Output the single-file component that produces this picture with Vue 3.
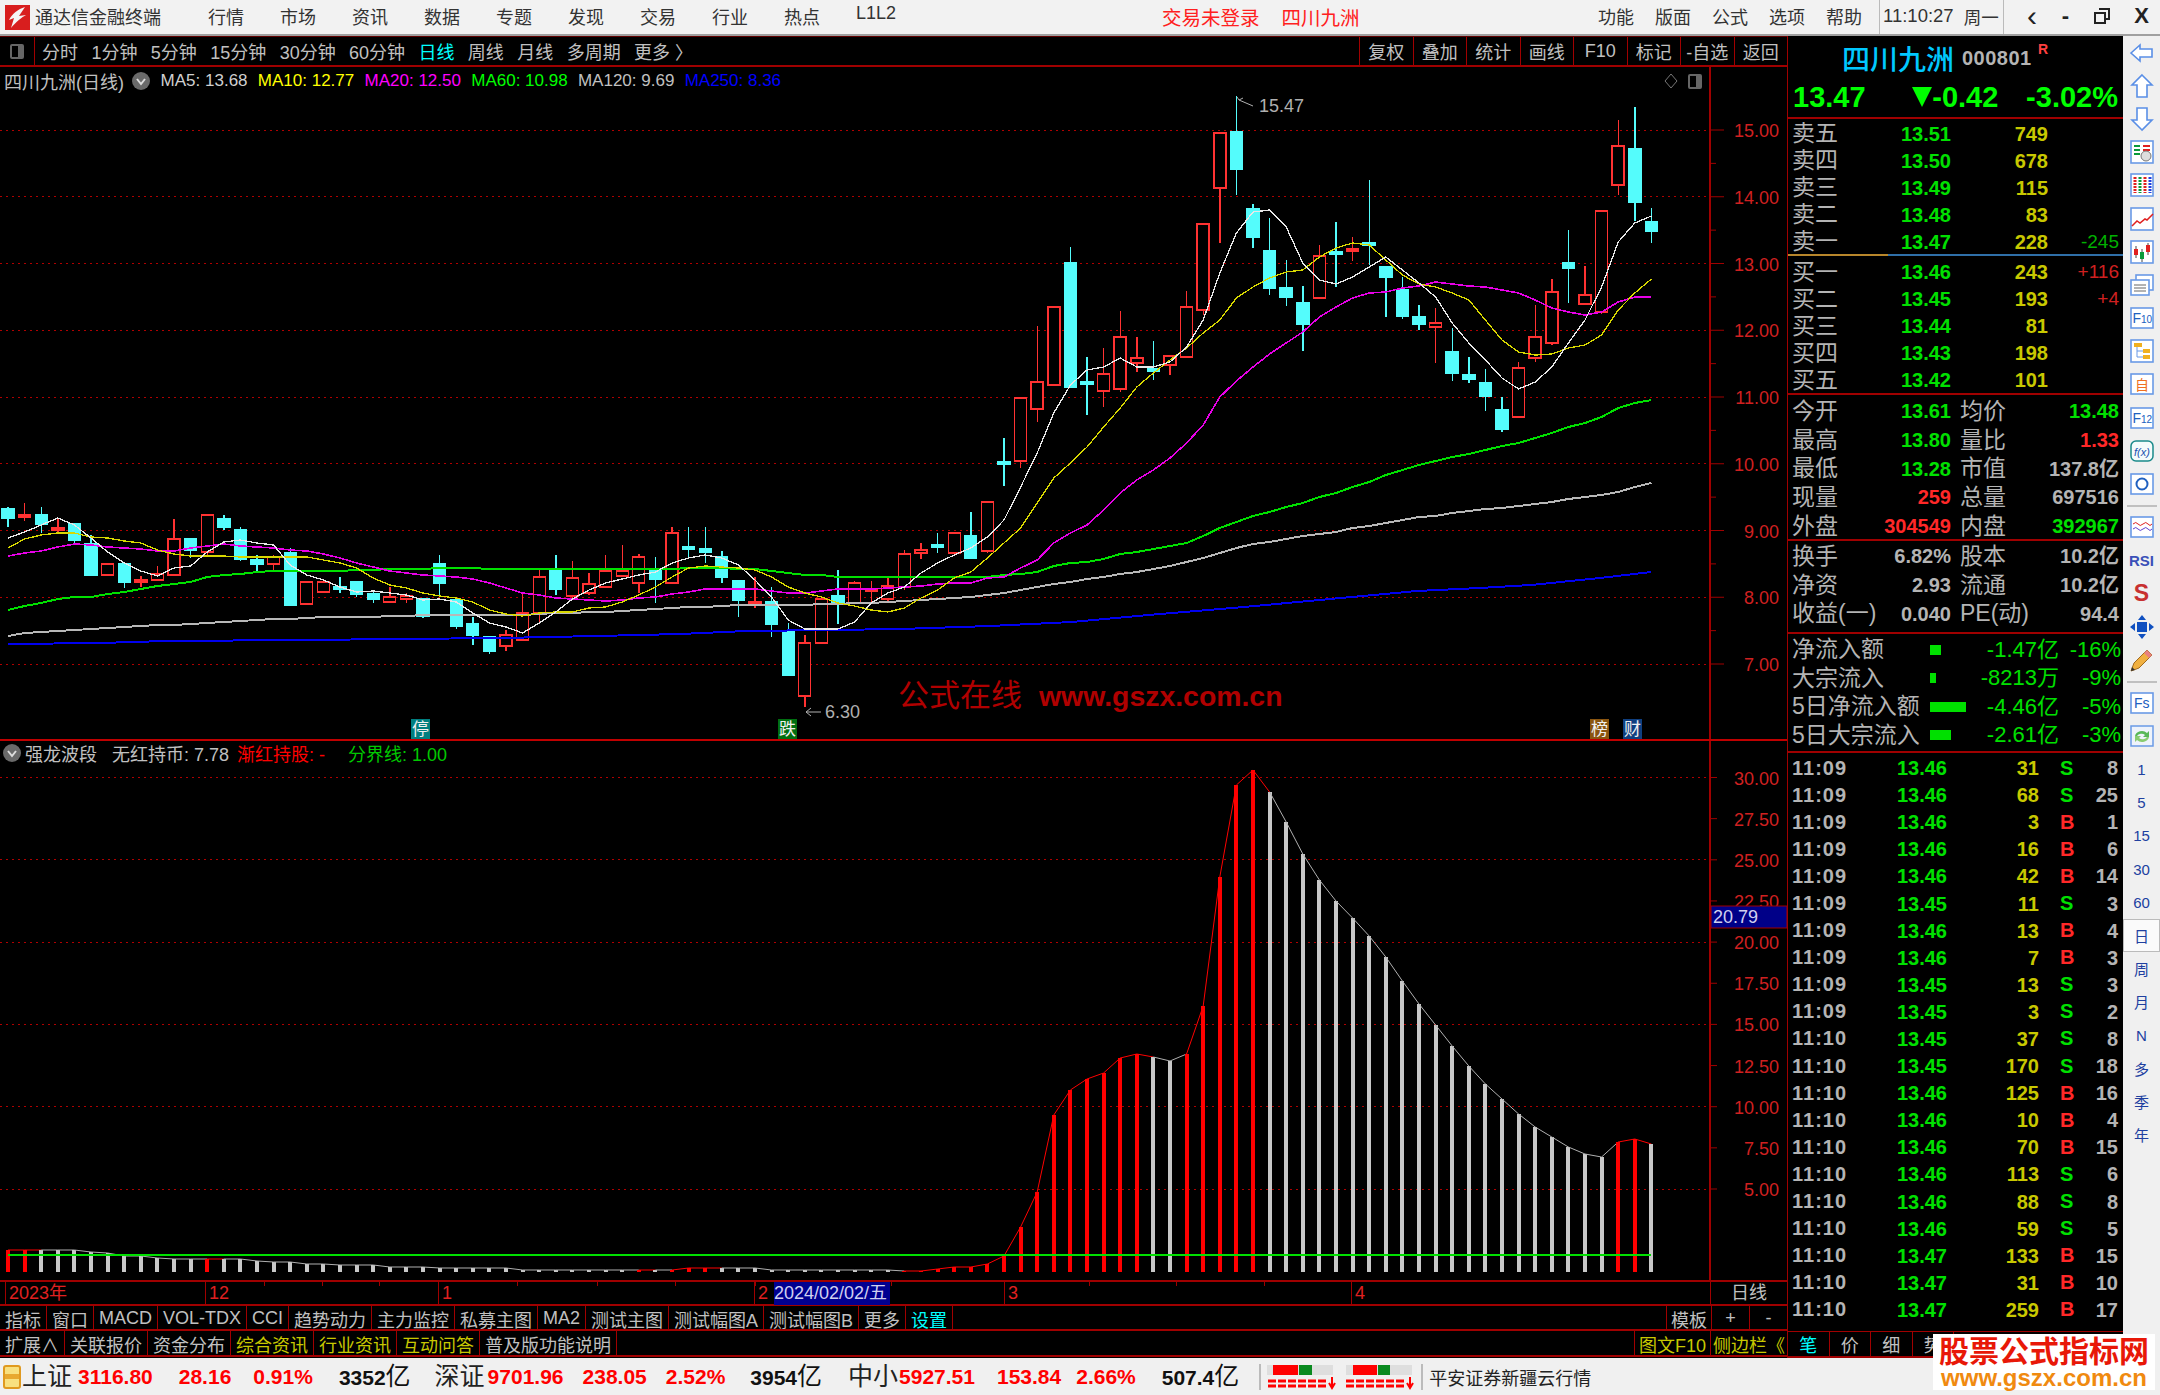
<script setup>
// 行情终端界面：K线、指标、盘口
const barX = (i) => 8 + i * 16.6;

const menus = ['行情', '市场', '资讯', '数据', '专题', '发现', '交易', '行业', '热点', 'L1L2'];
const sysMenus = ['功能', '版面', '公式', '选项', '帮助'];
const periods = ['分时', '1分钟', '5分钟', '15分钟', '30分钟', '60分钟', '日线', '周线', '月线', '多周期', '更多 〉'];
const tools = ['复权', '叠加', '统计', '画线', 'F10', '标记', '-自选', '返回'];

const maLegend = [
  { text: 'MA5: 13.68', color: '#d0d0d0' },
  { text: 'MA10: 12.77', color: '#ffff00' },
  { text: 'MA20: 12.50', color: '#ff00ff' },
  { text: 'MA60: 10.98', color: '#00ff00' },
  { text: 'MA120: 9.69', color: '#c0c0c0' },
  { text: 'MA250: 8.36', color: '#0000ff' }
];

// K线：[类型, 最高, 实体上沿, 实体下沿, 最低]，单位为页面 y 像素
const candles = [
  ['d',507,509,518,527],['u',503,515,517,521],['d',507,515,524,533],['u',518,528,529,532],['d',524,524,540,543],
  ['d',535,544,575,576],['u',563,564,575,575],['d',564,564,582,588],['u',576,580,581,587],['u',566,574,580,580],
  ['u',519,539,575,575],['d',539,539,550,558],['u',515,515,552,555],['d',515,519,527,530],['d',527,530,559,561],
  ['d',555,560,564,572],['u',555,557,564,570],['d',548,553,605,606],['u',581,582,604,604],['u',582,582,592,593],
  ['d',577,587,588,593],['d',581,582,594,597],['d',590,594,599,603],['u',587,597,602,603],['u',593,596,599,603],
  ['d',598,599,616,618],['d',555,564,583,597],['d',598,600,626,629],['d',617,624,635,645],['d',637,637,651,654],
  ['u',630,635,646,651],['u',593,613,640,640],['u',570,577,613,623],['d',555,570,589,595],['u',561,578,596,598],
  ['u',573,584,593,595],['u',555,571,587,588],['u',545,571,576,577],['u',554,557,583,593],['d',557,569,579,603],
  ['u',527,533,583,584],['d',527,547,548,558],['d',527,549,552,563],['d',551,557,577,583],['d',581,581,600,617],
  ['f',577,602,604,608],['d',587,602,624,637],['d',623,632,675,675],['u',635,643,696,707],['u',599,599,643,643],
  ['d',570,596,603,624],['u',581,583,603,603],['f',581,589,591,602],['u',577,586,599,602],['u',550,554,587,590],
  ['u',543,550,553,559],['d',533,545,546,553],['u',533,533,553,553],['d',512,536,558,559],['u',502,502,551,553],
  ['d',438,462,463,486],['u',398,398,461,468],['u',326,382,409,422],['u',307,307,385,385],['d',247,263,387,387],
  ['d',357,382,384,415],['u',348,374,391,407],['u',311,337,389,392],['u',337,358,363,372],['d',341,369,371,380],
  ['u',355,356,365,375],['u',291,307,357,357],['u',224,224,310,315],['u',133,133,188,243],['d',96,132,169,195],
  ['d',204,209,237,248],['d',218,251,288,295],['d',260,288,297,306],['d',286,303,324,351],['u',245,256,298,298],
  ['d',222,252,254,287],['f',237,249,251,261],['d',180,243,245,265],['d',267,267,277,317],['d',277,290,316,319],
  ['d',305,317,324,330],['u',308,323,327,363],['d',328,352,373,381],['d',357,375,379,383],['d',369,383,396,411],
  ['d',397,410,429,432],['u',362,368,417,417],['u',305,337,358,362],['u',279,292,343,345],['d',230,263,268,303],
  ['u',266,295,304,305],['u',211,211,312,314],['u',120,146,185,195],['d',107,149,202,221],['d',208,222,231,243]
].map((c, i) => ({ type: c[0], high: c[1], top: c[2], bottom: c[3], low: c[4], x: barX(i) }));

const toPoints = (ys) => ys.map((y, i) => `${barX(i)},${y}`).join(' ');

const ma5 = [538,532,525,518,525,538,552,563,571,576,568,566,552,542,540,543,545,565,575,580,587,592,591,593,595,600,599,602,613,623,627,633,623,612,599,590,583,579,575,572,563,558,555,558,565,580,597,620,629,629,629,622,603,593,587,573,563,555,548,537,520,487,453,413,385,370,367,358,367,367,362,347,320,273,233,212,210,227,263,280,284,277,267,257,270,283,297,323,343,360,378,389,382,367,343,320,287,242,223,216];
const ma10 = [548,539,535,533,533,537,538,541,543,550,554,556,556,556,557,557,557,557,557,560,563,568,578,585,588,593,596,598,602,610,614,616,613,612,612,608,607,602,595,587,577,568,566,567,568,570,577,587,593,597,603,606,610,612,608,598,590,578,572,558,543,528,503,478,463,447,427,408,387,373,360,348,333,320,298,287,278,272,270,257,248,243,245,260,275,284,287,293,300,320,340,352,355,354,348,345,335,310,293,279];
const ma20 = [556,553,551,547,544,545,547,548,549,551,551,548,546,544,546,547,548,550,551,554,558,563,567,571,573,575,576,577,579,583,588,593,595,598,599,600,601,600,598,597,594,592,589,589,589,589,591,593,593,591,589,589,589,588,587,586,584,583,583,578,577,568,560,543,533,525,510,493,480,470,458,443,425,397,381,367,354,343,332,317,307,298,293,292,288,286,282,284,286,287,290,293,300,308,312,315,312,302,297,297];
const ma60 = [610,606,603,599,597,597,594,592,589,586,584,582,577,575,574,572,571,571,571,571,571,570,570,569,569,569,568,568,568,569,569,569,569,569,569,569,569,569,569,569,569,568,568,568,569,569,571,573,575,575,577,577,577,577,577,577,577,577,577,577,575,574,572,566,563,562,559,554,552,549,546,543,536,528,522,516,512,507,503,497,493,487,482,475,470,465,461,457,454,450,446,443,438,433,427,423,417,408,403,400];
const ma120 = [636,633,632,631,630,629,628,627,626,625,625,624,623,622,621,620,619,619,618,617,617,617,617,616,616,615,615,615,615,615,615,615,614,613,613,612,612,611,610,609,608,607,607,606,605,605,605,605,605,604,604,603,603,602,601,600,599,598,597,595,593,590,587,584,582,579,577,574,572,569,566,562,558,553,548,544,542,539,536,534,532,528,526,523,520,517,516,513,511,509,508,506,504,502,499,497,495,492,487,483];
const ma250 = '8,644 100,643 166,641 300,640 402,639 500,638 597,636 680,634 746,631 830,630 900,629 990,626 1072,622 1160,614 1244,607 1330,599 1417,591 1480,588 1531,585 1600,578 1651,572';

const maLines = [
  { color: '#b8b8b8', width: 2, points: toPoints(ma120) },
  { color: '#0000f0', width: 2, points: ma250 },
  { color: '#00e000', width: 2, points: toPoints(ma60) },
  { color: '#e800e8', width: 1.6, points: toPoints(ma20) },
  { color: '#d8d800', width: 1.3, points: toPoints(ma10) },
  { color: '#e8e8e8', width: 1.3, points: toPoints(ma5) }
];

const priceY = (p) => 130 + (15 - p) * 66.75;
const priceGrid = [15, 14, 13, 12, 11, 10, 9, 8, 7].map((p) => ({ y: priceY(p), label: p.toFixed(2) }));
const priceMinor = [14.5, 13.5, 12.5, 11.5, 10.5, 9.5, 8.5, 7.5].map(priceY);

const markers = [
  { x: 411, text: '停', bg: '#007f80' },
  { x: 778, text: '跌', bg: '#006f10' },
  { x: 1590, text: '榜', bg: '#8a5510' },
  { x: 1623, text: '财', bg: '#0f3f80' }
];

// 副图：柱顶 y 像素
const indexTops = [1250,1250,1250,1250,1250,1252,1253,1256,1256,1258,1259,1259,1259,1259,1259,1261,1262,1262,1264,1264,1265,1265,1265,1267,1267,1267,1268,1268,1268,1268,1268,1270,1270,1270,1270,1270,1270,1270,1270,1270,1270,1268,1268,1268,1268,1268,1270,1270,1270,1270,1270,1270,1270,1270,1271,1271,1269,1267,1267,1264,1256,1227,1192,1115,1090,1079,1073,1058,1054,1057,1061,1054,1006,877,785,770,792,822,854,880,901,918,936,957,981,1004,1025,1046,1066,1084,1099,1114,1127,1137,1147,1154,1157,1142,1139,1144];
const redBars = new Set([0, 1, 12, 38, 40, 41, 42, 54, 55, 56, 57, 58, 59, 60, 61, 62, 63, 64, 65, 66, 67, 68, 71, 72, 73, 74, 75, 97, 98]);
const indexBars = indexTops.map((top, i) => ({
  x: barX(i),
  top,
  color: redBars.has(i) ? '#ff0000' : '#c8c8c8',
  next: i < 99 ? indexTops[i + 1] : null
}));

const indexY = (v) => 777.5 + (30 - v) * 16.46;
const indexGrid = [30, 25, 20, 15, 10, 5].map(indexY);
const indexLabels = [30, 27.5, 25, 22.5, 20, 17.5, 15, 12.5, 10, 7.5, 5].map((v) => ({ y: indexY(v), label: v.toFixed(2) }));

const monthTicks = [205, 264, 322, 379, 438, 517, 597, 675, 755, 891, 1089, 1176, 1264];
const monthMarks = [
  { x: 5, text: '2023年' },
  { x: 205, text: '12' },
  { x: 438, text: '1' },
  { x: 754, text: '2' },
  { x: 1004, text: '3' },
  { x: 1351, text: '4' }
];

const tabs = ['指标', '窗口', 'MACD', 'VOL-TDX', 'CCI', '趋势动力', '主力监控', '私募主图', 'MA2', '测试主图', '测试幅图A', '测试幅图B', '更多'];
const extTabs = [
  { text: '扩展∧' }, { text: '关联报价' }, { text: '资金分布' },
  { text: '综合资讯', hot: true }, { text: '行业资讯', hot: true }, { text: '互动问答', hot: true },
  { text: '普及版功能说明' }
];

const asks = [
  { name: '卖五', price: '13.51', vol: 749 }, { name: '卖四', price: '13.50', vol: 678 },
  { name: '卖三', price: '13.49', vol: 115 }, { name: '卖二', price: '13.48', vol: 83 },
  { name: '卖一', price: '13.47', vol: 228, diff: '-245', down: true }
];
const bids = [
  { name: '买一', price: '13.46', vol: 243, diff: '+116' }, { name: '买二', price: '13.45', vol: 193, diff: '+4' },
  { name: '买三', price: '13.44', vol: 81 }, { name: '买四', price: '13.43', vol: 198 },
  { name: '买五', price: '13.42', vol: 101 }
];
const stats = [
  ['今开', '13.61', 'g', '均价', '13.48', 'g'],
  ['最高', '13.80', 'g', '量比', '1.33', 'r'],
  ['最低', '13.28', 'g', '市值', '137.8亿', 'w'],
  ['现量', '259', 'r', '总量', '697516', 'w'],
  ['外盘', '304549', 'r', '内盘', '392967', 'g']
];
const finance = [
  ['换手', '6.82%', 'w', '股本', '10.2亿', 'w'],
  ['净资', '2.93', 'w', '流通', '10.2亿', 'w'],
  ['收益(一)', '0.040', 'w', 'PE(动)', '94.4', 'w']
];
const flows = [
  { name: '净流入额', bar: 11, value: '-1.47亿', pct: '-16%' },
  { name: '大宗流入', bar: 6, value: '-8213万', pct: '-9%' },
  { name: '5日净流入额', bar: 36, value: '-4.46亿', pct: '-5%' },
  { name: '5日大宗流入', bar: 21, value: '-2.61亿', pct: '-3%' }
];
const ticks = [
  ['11:09', '13.46', 31, 'S', 8], ['11:09', '13.46', 68, 'S', 25], ['11:09', '13.46', 3, 'B', 1],
  ['11:09', '13.46', 16, 'B', 6], ['11:09', '13.46', 42, 'B', 14], ['11:09', '13.45', 11, 'S', 3],
  ['11:09', '13.46', 13, 'B', 4], ['11:09', '13.46', 7, 'B', 3], ['11:09', '13.45', 13, 'S', 3],
  ['11:09', '13.45', 3, 'S', 2], ['11:10', '13.45', 37, 'S', 8], ['11:10', '13.45', 170, 'S', 18],
  ['11:10', '13.46', 125, 'B', 16], ['11:10', '13.46', 10, 'B', 4], ['11:10', '13.46', 70, 'B', 15],
  ['11:10', '13.46', 113, 'S', 6], ['11:10', '13.46', 88, 'S', 8], ['11:10', '13.46', 59, 'S', 5],
  ['11:10', '13.47', 133, 'B', 15], ['11:10', '13.47', 31, 'B', 10], ['11:10', '13.47', 259, 'B', 17]
];
const railPeriods = ['1', '5', '15', '30', '60', '日', '周', '月', 'N', '多', '季', '年'];

const indices = [
  { name: '上证', val: '3116.80', chg: '28.16', pct: '0.91%', amount: '3352', nameW: 56, gapA: 26, gapB: 22, gapC: 26, gapD: 24 },
  { name: '深证', val: '9701.96', chg: '238.05', pct: '2.52%', amount: '3954', nameW: 53, gapA: 19, gapB: 19, gapC: 25, gapD: 26 },
  { name: '中小', val: '5927.51', chg: '153.84', pct: '2.66%', amount: '507.4', nameW: 51, gapA: 22, gapB: 15, gapC: 26, gapD: 0 }
];
</script>

<template>
  <div class="terminal">
    <header class="titlebar">
      <svg class="logo" viewBox="0 0 25 25">
        <rect width="25" height="25" fill="#d81e1e" />
        <path d="M20 2 C13 4 7 9 4 15 L9 13 L6 23 C11 17 17 12 21 10 L14 11 Z" fill="#f4f4f4" />
      </svg>
      <span class="app-name">通达信金融终端</span>
      <nav class="menus">
        <span v-for="m in menus" :key="m" class="menu">{{ m }}</span>
      </nav>
      <div class="login-state">
        <span>交易未登录</span>
        <span>四川九洲</span>
      </div>
      <nav class="sys-menus">
        <span v-for="m in sysMenus" :key="m">{{ m }}</span>
      </nav>
      <div class="clock">
        <span>11:10:27</span>
        <span>周一</span>
      </div>
      <div class="win-buttons">
        <span class="win-btn back">‹</span>
        <span class="win-btn">-</span>
        <svg class="win-restore" viewBox="0 0 16 16">
          <path d="M5 1h10v10h-4M1 5h10v10H1z" fill="none" stroke="#222" stroke-width="2" />
        </svg>
        <span class="win-btn">X</span>
      </div>
    </header>

    <div class="workspace">
      <main class="chart-col">
        <div class="toolbar">
          <div class="toggle-cell"><span class="toggle-icon"></span></div>
          <div class="periods">
            <span v-for="p in periods" :key="p" :class="{ active: p === '日线' }">{{ p }}</span>
          </div>
          <div class="tools">
            <span v-for="t in tools" :key="t" class="tool">{{ t }}</span>
          </div>
        </div>

        <section class="price-pane">
          <div class="plot">
            <div class="legend">
              <span class="legend-name">四川九洲(日线)</span>
              <svg class="legend-arrow" viewBox="0 0 18 18">
                <circle cx="9" cy="9" r="9" fill="#6a6a6a" />
                <path d="M5 7l4 5 4-5" fill="none" stroke="#ddd" stroke-width="2" />
              </svg>
              <span v-for="m in maLegend" :key="m.text" :style="{ color: m.color }">{{ m.text }}</span>
              <span class="legend-end">
                <svg width="14" height="16" viewBox="0 0 14 16"><path d="M7 1 13 8 7 15 1 8Z" fill="none" stroke="#777" /></svg>
                <span class="toggle-icon small"></span>
              </span>
            </div>
            <svg class="plot-svg" width="1710" height="646" viewBox="0 95 1710 646">
              <line v-for="g in priceGrid" :key="g.label" x1="0" x2="1710" :y1="g.y" :y2="g.y" class="dotted" />
              <g v-for="(c, i) in candles" :key="i">
                <line
                  :x1="c.x" :x2="c.x" :y1="c.high" :y2="c.low"
                  :stroke="c.type === 'd' ? '#54fcfc' : '#ff3232'"
                  stroke-width="1.4"
                  shape-rendering="crispEdges"
                />
                <rect
                  :x="c.x - 6" :y="c.top" width="12" :height="Math.max(c.bottom - c.top, 2)"
                  :fill="c.type === 'd' ? '#54fcfc' : c.type === 'f' ? '#ff3232' : '#000'"
                  :stroke="c.type === 'd' ? '#54fcfc' : '#ff3232'"
                  stroke-width="1.4"
                  shape-rendering="crispEdges"
                />
              </g>
              <polyline
                v-for="l in maLines" :key="l.color"
                :points="l.points" :stroke="l.color" :stroke-width="l.width"
                fill="none"
                shape-rendering="crispEdges"
              />
              <path d="M1239 100 l-2 -3 m2 3 l4 -2 m-4 2 l14 6" stroke="#b0b0b0" fill="none" />
              <text x="1259" y="112" class="peak-label">15.47</text>
              <path d="M821 712 H806 m5 -4 l-5 4 5 4" stroke="#b0b0b0" fill="none" />
              <text x="825" y="718" class="peak-label">6.30</text>
              <g v-for="m in markers" :key="m.text">
                <rect :x="m.x" y="719" width="19" height="20" :fill="m.bg" />
                <text :x="m.x + 1" y="735" class="marker-text">{{ m.text }}</text>
              </g>
              <text x="898" y="706" class="site-cn">公式在线</text>
              <text x="1039" y="706" class="site-en">www.gszx.com.cn</text>
            </svg>
          </div>
          <svg class="axis" width="76" height="672" viewBox="1711 67 76 672">
            <g v-for="g in priceGrid" :key="g.label">
              <line x1="1711" x2="1724" :y1="g.y" :y2="g.y" stroke="#a00000" />
              <text x="1779" :y="g.y + 7" class="axis-text">{{ g.label }}</text>
            </g>
            <line v-for="y in priceMinor" :key="y" x1="1711" x2="1716" :y1="y" :y2="y" stroke="#a00000" />
          </svg>
        </section>

        <section class="index-pane">
          <div class="index-legend">
            <svg class="legend-arrow" viewBox="0 0 18 18">
              <circle cx="9" cy="9" r="9" fill="#6a6a6a" />
              <path d="M5 7l4 5 4-5" fill="none" stroke="#ddd" stroke-width="2" />
            </svg>
            <span class="index-name">强龙波段</span>
            <span class="grey">无红持币: 7.78</span>
            <span class="red">渐红持股: -</span>
            <span class="green">分界线: 1.00</span>
          </div>
          <svg class="plot-svg" width="1710" height="539" viewBox="0 741 1710 539">
            <line v-for="y in indexGrid" :key="y" x1="0" x2="1710" :y1="y" :y2="y" class="dotted" />
            <g v-for="(b, i) in indexBars" :key="i">
              <rect :x="b.x - 2" :y="b.top" width="4" :height="1272 - b.top" :fill="b.color" shape-rendering="crispEdges" />
              <line
                v-if="b.next" :x1="b.x" :x2="b.x + 16.6" :y1="b.top" :y2="b.next"
                :stroke="b.color === '#ff0000' ? '#ff0000' : '#b0b0b0'"
              />
            </g>
            <line x1="8" x2="1651" y1="1255" y2="1255" stroke="#00e000" stroke-width="2" shape-rendering="crispEdges" />
          </svg>
          <svg class="axis" width="76" height="539" viewBox="1711 741 76 539">
            <g v-for="l in indexLabels" :key="l.label">
              <line x1="1711" x2="1717" :y1="l.y" :y2="l.y" stroke="#a00000" />
              <text x="1779" :y="l.y + 7" class="axis-text">{{ l.label }}</text>
            </g>
            <rect x="1711" y="906" width="76" height="22" fill="#000088" stroke="#a00000" />
            <text x="1713" y="923" class="cursor-text">20.79</text>
          </svg>
        </section>

        <div class="date-row">
          <div class="date-track">
            <i v-for="x in monthTicks" :key="x" class="month-tick" :style="{ left: x + 'px' }"></i>
            <span v-for="m in monthMarks" :key="m.text" class="month" :style="{ left: m.x + 'px' }">{{ m.text }}</span>
            <span class="cursor-date">2024/02/02/五</span>
          </div>
          <div class="date-mode">日线</div>
        </div>

        <div class="tab-row">
          <span v-for="t in tabs" :key="t" class="tab">{{ t }}</span>
          <span class="tab cyan">设置</span>
          <span class="tab-fill"></span>
          <span class="tab edge">模板</span>
          <span class="tab edge sign">+</span>
          <span class="tab edge sign">-</span>
        </div>
        <div class="tab-row ext">
          <span v-for="t in extTabs" :key="t.text" class="tab" :class="{ olive: t.hot }">{{ t.text }}</span>
          <span class="tab-fill"></span>
          <span class="tab edge olive">图文F10</span>
          <span class="tab edge olive side-tab">侧边栏《</span>
        </div>
      </main>

      <aside class="quote">
        <div class="quote-head">
          <div class="name-row">
            <span class="stock-name">四川九洲</span>
            <span class="stock-code">000801</span>
            <span class="stock-flag">R</span>
          </div>
          <div class="price-row">
            <span>13.47</span>
            <span class="chg"><i class="tri"></i>-0.42</span>
            <span>-3.02%</span>
          </div>
        </div>

        <div class="book asks">
          <div v-for="r in asks" :key="r.name" class="book-row">
            <span class="label">{{ r.name }}</span>
            <span class="num g">{{ r.price }}</span>
            <span class="num y">{{ r.vol }}</span>
            <span class="diff" :class="r.down ? 'dg' : 'dr'">{{ r.diff }}</span>
          </div>
        </div>
        <div class="book bids">
          <div v-for="r in bids" :key="r.name" class="book-row">
            <span class="label">{{ r.name }}</span>
            <span class="num g">{{ r.price }}</span>
            <span class="num y">{{ r.vol }}</span>
            <span class="diff dr">{{ r.diff }}</span>
          </div>
        </div>

        <div class="stat-block">
          <div v-for="s in stats" :key="s[0]" class="stat-row">
            <span class="label">{{ s[0] }}</span>
            <span class="num" :class="s[2]">{{ s[1] }}</span>
            <span class="label second">{{ s[3] }}</span>
            <span class="num" :class="s[5]">{{ s[4] }}</span>
          </div>
        </div>
        <div class="stat-block finance">
          <div v-for="s in finance" :key="s[0]" class="stat-row">
            <span class="label">{{ s[0] }}</span>
            <span class="num" :class="s[2]">{{ s[1] }}</span>
            <span class="label second">{{ s[3] }}</span>
            <span class="num" :class="s[5]">{{ s[4] }}</span>
          </div>
        </div>
        <div class="flow-block">
          <div v-for="f in flows" :key="f.name" class="flow-row">
            <span class="label">{{ f.name }}</span>
            <span class="flow-bar-cell"><i class="flow-bar" :style="{ width: f.bar + 'px' }"></i></span>
            <span class="num g thin">{{ f.value }}</span>
            <span class="num g thin">{{ f.pct }}</span>
          </div>
        </div>
        <div class="tick-block">
          <div v-for="(t, i) in ticks" :key="i" class="tick-row">
            <span class="tick-time">{{ t[0] }}</span>
            <span class="num g">{{ t[1] }}</span>
            <span class="num y">{{ t[2] }}</span>
            <span class="side" :class="t[3] === 'B' ? 'r' : 'g'">{{ t[3] }}</span>
            <span class="num w">{{ t[4] }}</span>
          </div>
        </div>
        <div class="quote-tabs">
          <span class="cyan">笔</span><span>价</span><span>细</span><span>势</span>
        </div>
      </aside>

      <nav class="rail">
        <div class="rail-item"><svg viewBox="0 0 26 26"><path d="M2 13 11 5v4h12v8H11v4Z" class="ic-arrow" /></svg></div>
        <div class="rail-item"><svg viewBox="0 0 26 26"><path d="M13 2 23 12h-5v12H8V12H3Z" class="ic-arrow" /></svg></div>
        <div class="rail-item"><svg viewBox="0 0 26 26"><path d="M13 24 3 14h5V2h10v12h5Z" class="ic-arrow" /></svg></div>
        <div class="rail-item">
          <svg viewBox="0 0 26 26">
            <rect x="2" y="2" width="22" height="22" class="ic-box" />
            <path d="M5 7h6M5 11h6M5 15h6" stroke="#0a9a3a" stroke-width="2" />
            <path d="M14 7h7M14 11h7" stroke="#e02020" stroke-width="2" />
            <circle cx="17" cy="17" r="5" fill="#ddd" stroke="#777" />
          </svg>
        </div>
        <div class="rail-item">
          <svg viewBox="0 0 26 26">
            <rect x="2" y="2" width="22" height="22" class="ic-box" />
            <path d="M6 5v16" stroke="#e02020" stroke-width="3" stroke-dasharray="2 1" />
            <path d="M11 5v16" stroke="#0a9a3a" stroke-width="3" stroke-dasharray="2 1" />
            <path d="M16 5v16" stroke="#e02020" stroke-width="3" stroke-dasharray="2 1" />
            <path d="M21 5v16" stroke="#2040e0" stroke-width="3" stroke-dasharray="2 1" />
          </svg>
        </div>
        <div class="rail-item">
          <svg viewBox="0 0 26 26">
            <rect x="2" y="2" width="22" height="22" class="ic-box" />
            <path d="M3 20 8 15l3 2 5-4 2 1 6-6" fill="none" stroke="#e02020" stroke-width="1.5" />
          </svg>
        </div>
        <div class="rail-item">
          <svg viewBox="0 0 26 26">
            <rect x="2" y="2" width="22" height="22" class="ic-box" />
            <path d="M7 7v12M13 10v13M19 4v12" stroke="#444" />
            <rect x="5" y="10" width="4" height="6" fill="#e02020" />
            <rect x="11" y="13" width="4" height="7" fill="#0a9a3a" />
            <rect x="17" y="6" width="4" height="7" fill="#e02020" />
          </svg>
        </div>
        <div class="rail-item">
          <svg viewBox="0 0 26 26">
            <rect x="7" y="3" width="17" height="15" class="ic-box" />
            <rect x="2" y="8" width="18" height="15" class="ic-box" />
            <path d="M5 13h12M5 16h12M5 19h12" stroke="#666" />
          </svg>
        </div>
        <div class="rail-item">
          <svg viewBox="0 0 26 26"><rect x="2" y="3" width="22" height="20" class="ic-box" /><text x="3.5" y="18" class="ic-text">F<tspan class="ic-small">10</tspan></text></svg>
        </div>
        <div class="rail-item">
          <svg viewBox="0 0 26 26">
            <rect x="2" y="2" width="22" height="22" class="ic-box" />
            <rect x="5" y="5" width="8" height="4" fill="#f0b020" />
            <rect x="14" y="11" width="7" height="4" fill="#f0b020" />
            <rect x="14" y="17" width="7" height="4" fill="#f0b020" />
            <path d="M8 9v10h6M8 13h6" stroke="#6a9ae6" fill="none" />
          </svg>
        </div>
        <div class="rail-item">
          <svg viewBox="0 0 26 26"><rect x="2" y="3" width="22" height="20" class="ic-box" /><text x="6" y="19" class="ic-zi">自</text></svg>
        </div>
        <div class="rail-item">
          <svg viewBox="0 0 26 26"><rect x="2" y="3" width="22" height="20" class="ic-box" /><text x="3.5" y="18" class="ic-text">F<tspan class="ic-small">12</tspan></text></svg>
        </div>
        <div class="rail-item">
          <svg viewBox="0 0 26 26">
            <rect x="2" y="3" width="22" height="20" rx="5" fill="#f4fbfb" stroke="#1a8a8a" stroke-width="1.5" />
            <text x="5" y="18" class="ic-fx">f(x)</text>
          </svg>
        </div>
        <div class="rail-item">
          <svg viewBox="0 0 26 26">
            <rect x="2" y="3" width="22" height="20" class="ic-box" />
            <circle cx="13" cy="13" r="5.5" fill="none" stroke="#2060c0" stroke-width="2" />
          </svg>
        </div>
        <div class="rail-sep"></div>
        <div class="rail-item">
          <svg viewBox="0 0 26 26">
            <rect x="2" y="3" width="22" height="20" class="ic-box" />
            <path d="M4 10q3-3 5 0t5 0 5 0 4 0" fill="none" stroke="#e02020" />
            <path d="M4 15q3-3 5 0t5 0 5 0 4 0" fill="none" stroke="#6040d0" />
          </svg>
        </div>
        <div class="rail-item"><span class="rsi">RSI</span></div>
        <div class="rail-item"><span class="dollar">S</span></div>
        <div class="rail-item">
          <svg viewBox="0 0 26 26">
            <path d="M13 1 17 6h-8ZM13 25 9 20h8ZM1 13 6 9v8ZM25 13 20 17V9Z" fill="#1050c0" />
            <rect x="8" y="8" width="10" height="10" fill="#1050c0" />
          </svg>
        </div>
        <div class="rail-item">
          <svg viewBox="0 0 26 26">
            <path d="M2 24 5 16 18 3l5 5L10 21Z" fill="#f0b040" stroke="#a06a20" />
            <path d="M18 3l5 5-3 3-5-5Z" fill="#e88080" />
            <path d="M2 24l1-4 3 3Z" fill="#333" />
          </svg>
        </div>
        <div class="rail-sep"></div>
        <div class="rail-item">
          <svg viewBox="0 0 26 26"><rect x="2" y="3" width="22" height="20" class="ic-box" /><text x="5" y="18" class="ic-text">Fs</text></svg>
        </div>
        <div class="rail-item">
          <svg viewBox="0 0 26 26">
            <rect x="2" y="3" width="22" height="20" fill="#eef3fb" stroke="#6a9ae6" stroke-width="1.5" />
            <path d="M6 13a7 6 0 0 1 12-3l2-2v6h-6l2-2a5 4 0 0 0-8 1Z" fill="#58b858" />
            <path d="M20 14a7 6 0 0 1-12 3l-2 2v-6h6l-2 2a5 4 0 0 0 8-1Z" fill="#88cc70" />
          </svg>
        </div>
        <div
          v-for="p in railPeriods" :key="p"
          class="rail-item period" :class="{ current: p === '日' }"
        >{{ p }}</div>
      </nav>
    </div>

    <footer class="statusbar">
      <span class="index-icon"><i></i></span>
      <div v-for="idx in indices" :key="idx.name" class="index-cell">
        <span class="idx-name" :style="{ width: idx.nameW + 'px' }">{{ idx.name }}</span>
        <span class="idx-num" :style="{ marginRight: idx.gapA + 'px' }">{{ idx.val }}</span>
        <span class="idx-num" :style="{ marginRight: idx.gapB + 'px' }">{{ idx.chg }}</span>
        <span class="idx-num" :style="{ marginRight: idx.gapC + 'px' }">{{ idx.pct }}</span>
        <span class="idx-amount" :style="{ marginRight: idx.gapD + 'px' }">{{ idx.amount }}<em>亿</em></span>
      </div>
      <svg class="breadth" width="148" height="26" viewBox="0 0 148 26">
        <rect x="0" y="1" width="66" height="10" fill="#dedede" />
        <rect x="6" y="1" width="25" height="10" fill="#ff0000" />
        <rect x="32" y="1" width="13" height="10" fill="#0a8a20" />
        <path d="M1 17h59M1 22h59" stroke="#ff0000" stroke-width="3" stroke-dasharray="8 2" />
        <path d="M65 13v9m-3-3 3 5 3-5" stroke="#ff0000" stroke-width="2" fill="none" />
        <rect x="79" y="1" width="66" height="10" fill="#dedede" />
        <rect x="86" y="1" width="24" height="10" fill="#ff0000" />
        <rect x="111" y="1" width="12" height="10" fill="#0a8a20" />
        <path d="M79 17h58M79 22h58" stroke="#ff0000" stroke-width="3" stroke-dasharray="8 2" />
        <path d="M143 13v9m-3-3 3 5 3-5" stroke="#ff0000" stroke-width="2" fill="none" />
      </svg>
      <span class="broker">平安证券新疆云行情</span>
    </footer>

    <div class="site-badge">
      <span class="badge-cn">股票公式指标网</span>
      <span class="badge-en">www.gszx.com.cn</span>
    </div>
  </div>
</template>

<style>
html,
body {
  margin: 0;
  background: #000;
}
</style>

<style scoped>
.terminal {
  position: relative;
  width: 2160px;
  height: 1395px;
  overflow: hidden;
  display: flex;
  flex-direction: column;
  background: #000;
  color: #c0c0c0;
  font-family: "Liberation Sans", "Noto Sans CJK SC", sans-serif;
  font-size: 18px;
}

/* 标题栏 */
.titlebar {
  height: 32px;
  padding-bottom: 2px;
  flex: none;
  display: flex;
  align-items: center;
  background: #f2f2f2;
  color: #333;
  border-bottom: 2px solid #a0a0a0;
  box-sizing: content-box;
}
.logo {
  width: 25px;
  height: 25px;
  margin: 2px 0 0 5px;
  flex: none;
}
.app-name {
  margin-left: 5px;
  width: 173px;
}
.menus {
  display: flex;
  gap: 36px;
  width: 762px;
}
.login-state {
  display: flex;
  gap: 22px;
  color: #ff2020;
  font-size: 19.5px;
  width: 436px;
  margin-left: 192px;
}
.sys-menus {
  display: flex;
  gap: 21px;
  width: 282px;
  border-right: 1px solid #bbb;
  height: 34px;
  padding-bottom: 2px;
  align-self: flex-start;
  align-items: center;
  box-sizing: border-box;
}
.clock {
  display: flex;
  gap: 10px;
  padding: 0 0 2px 3px;
  width: 124px;
  box-sizing: border-box;
  border-right: 1px solid #bbb;
  height: 34px;
  align-self: flex-start;
  align-items: center;
  font-size: 18.5px;
  white-space: nowrap;
}
.clock span:last-child {
  font-size: 17.5px;
}
.win-buttons {
  flex: 1;
  display: flex;
  align-items: center;
  justify-content: space-between;
  padding: 0 11px 0 23px;
  color: #222;
  font-size: 22px;
  font-weight: 700;
}
.win-btn.back {
  font-size: 30px;
  font-weight: 400;
  line-height: 24px;
}
.win-restore {
  width: 16px;
  height: 16px;
}

.workspace {
  flex: none;
  height: 1322px;
  display: flex;
}

/* 左侧图表区 */
.chart-col {
  width: 1787px;
  flex: none;
  display: flex;
  flex-direction: column;
}
.toolbar {
  height: 31px;
  flex: none;
  display: flex;
  align-items: center;
  border-bottom: 2px solid #a00000;
  border-top: 1px solid #600000;
  box-sizing: border-box;
}
.toggle-cell {
  width: 35px;
  height: 100%;
  display: flex;
  align-items: center;
  justify-content: center;
  border-right: 1px solid #a00000;
  box-sizing: border-box;
}
.toggle-icon {
  display: block;
  width: 14px;
  height: 15px;
  border: 2px solid #666;
  border-radius: 2px;
  box-sizing: border-box;
  border-right-width: 6px;
}
.toggle-icon.small {
  margin-left: 10px;
}
.periods {
  display: flex;
  gap: 13.4px;
  margin-left: 7px;
  flex: 1;
}
.periods .active {
  color: #00ffff;
}
.tools {
  display: flex;
  height: 100%;
}
.tool {
  width: 52.5px;
  display: flex;
  align-items: center;
  justify-content: center;
  border-left: 1px solid #a00000;
}

.price-pane {
  height: 674px;
  flex: none;
  display: flex;
  border-bottom: 2px solid #c00000;
  box-sizing: border-box;
}
.index-pane {
  position: relative;
  height: 541px;
  flex: none;
  display: flex;
  border-bottom: 2px solid #a00000;
  box-sizing: border-box;
}
.plot {
  width: 1710px;
  flex: none;
  height: 672px;
  overflow: hidden;
}
.legend {
  height: 28px;
  display: flex;
  align-items: center;
  gap: 10.3px;
  padding-left: 4px;
  font-size: 17px;
  white-space: nowrap;
}
.legend-name {
  font-size: 18px;
  margin-right: -2px;
}
.legend-arrow {
  width: 18px;
  height: 18px;
  flex: none;
}
.legend-end {
  margin-left: auto;
  margin-right: 8px;
  display: flex;
  align-items: center;
}
.plot-svg {
  display: block;
  flex: none;
}
.dotted {
  stroke: #b00000;
  stroke-width: 1;
  stroke-dasharray: 2 4;
  shape-rendering: crispEdges;
}
.peak-label {
  fill: #b0b0b0;
  font-size: 18px;
}
.marker-text {
  fill: #f0f0f0;
  font-size: 17px;
}
.site-cn {
  fill: #b00000;
  font-size: 31px;
  font-family: "Noto Sans CJK SC", sans-serif;
}
.site-en {
  fill: #b00000;
  font-size: 28.4px;
  font-weight: 700;
}
.axis {
  display: block;
  flex: none;
  border-left: 2px solid #a00000;
  margin-left: -1px;
}
.axis-text {
  fill: #d02020;
  font-size: 18px;
  text-anchor: end;
}
.cursor-text {
  fill: #d0d0f0;
  font-size: 18px;
}
.index-legend {
  position: absolute;
  left: 3px;
  top: 0;
  height: 24px;
  display: flex;
  align-items: center;
  gap: 15px;
  font-size: 18px;
}
.index-name {
  margin-left: -11px;
}
.grey {
  color: #c0c0c0;
}
.red {
  color: #ff0000;
  margin-left: -7px;
}
.green {
  color: #00c800;
  margin-left: 8px;
}

/* 日期行 */
.date-row {
  height: 23px;
  flex: none;
  display: flex;
}
.date-track {
  position: relative;
  width: 1710px;
  flex: none;
}
.month {
  position: absolute;
  top: 0;
  height: 23px;
  padding-left: 3px;
  line-height: 23px;
  color: #e02020;
  border-left: 1px solid #a00000;
}
.month-tick {
  position: absolute;
  top: 0;
  width: 1px;
  height: 4px;
  background: #a00000;
}
.cursor-date {
  position: absolute;
  left: 774px;
  top: 0;
  width: 116px;
  height: 23px;
  line-height: 23px;
  background: #000090;
  color: #d0d0f0;
  white-space: nowrap;
}
.date-mode {
  flex: 1;
  border-left: 1px solid #a00000;
  text-align: center;
  line-height: 23px;
}

.tab-row {
  height: 26px;
  flex: none;
  display: flex;
  border-top: 2px solid #a00000;
  box-sizing: border-box;
  margin-top: -1px;
}
.tab-row.ext {
  height: 28px;
  border-bottom: 2px solid #a00000;
}
.tab {
  display: flex;
  align-items: center;
  justify-content: center;
  padding: 1px 5px 0;
  border-right: 1px solid #a00000;
  white-space: nowrap;
}
.tab-fill {
  flex: 1;
}
.tab.edge {
  border-right: none;
  border-left: 1px solid #a00000;
  padding: 1px 4px 0;
}
.tab.sign {
  width: 38px;
  box-sizing: border-box;
}
.tab.side-tab {
  width: 77px;
  box-sizing: border-box;
  padding: 1px 0 0;
}
.cyan {
  color: #00ffff;
}
.olive {
  color: #c8c800;
}

/* 右侧盘口 */
.quote {
  width: 336px;
  flex: none;
  display: flex;
  flex-direction: column;
  border-left: 1px solid #a00000;
  box-sizing: border-box;
  font-size: 20px;
}
.quote-head {
  height: 83px;
  flex: none;
  border-bottom: 2px solid #a00000;
  box-sizing: border-box;
}
.name-row {
  position: relative;
  height: 44px;
  display: flex;
  align-items: center;
  padding-left: 54px;
}
.stock-name {
  color: #00c8ff;
  font-size: 28px;
  font-weight: 500;
  width: 120px;
}
.stock-code {
  color: #b4b4b4;
  font-size: 20px;
  font-weight: 700;
  letter-spacing: 0.5px;
}
.stock-flag {
  position: absolute;
  left: 250px;
  top: 5px;
  color: #ff4040;
  font-size: 14px;
  font-weight: 700;
}
.price-row {
  display: flex;
  justify-content: space-between;
  padding: 0 5px;
  color: #00ff00;
  font-size: 29px;
  font-weight: 700;
  line-height: 34px;
}
.chg {
  display: flex;
  align-items: center;
  margin-left: 19px;
}
.tri {
  width: 0;
  height: 0;
  border-left: 10px solid transparent;
  border-right: 10px solid transparent;
  border-top: 20px solid #00ff00;
}
.book {
  flex: none;
  padding-left: 4px;
}
.asks {
  height: 137px;
  padding-top: 1px;
  border-bottom: 2px solid;
  border-image: linear-gradient(to right, #b8862b 100px, #2f6fa8 100px) 1;
  box-sizing: border-box;
}
.bids {
  height: 139px;
  padding-top: 2.5px;
  border-bottom: 2px solid #a00000;
  box-sizing: border-box;
}
.book-row {
  height: 27.08px;
  display: grid;
  grid-template-columns: 60px 99px 97px 71px;
  align-items: center;
}
.label {
  color: #b4b4b4;
  font-size: 23px;
  line-height: 1;
  white-space: nowrap;
}
.num {
  text-align: right;
  font-weight: 700;
  line-height: 1;
  white-space: nowrap;
}
.num.thin {
  font-weight: 400;
  font-size: 22px;
}
.g {
  color: #00e000;
}
.y {
  color: #c8c800;
}
.r {
  color: #ff2828;
}
.w {
  color: #b4b4b4;
}
.diff {
  text-align: right;
  font-size: 19px;
}
.dg {
  color: #00b000;
}
.dr {
  color: #d02020;
}
.stat-block {
  flex: none;
  height: 146px;
  padding: 2px 0 0 4px;
  border-bottom: 2px solid #a00000;
  box-sizing: border-box;
}
.stat-block.finance {
  height: 93px;
  padding-top: 1px;
}
.stat-row {
  height: 28.7px;
  display: grid;
  grid-template-columns: 60px 99px 60px 108px;
  align-items: center;
}
.label.second {
  padding-left: 9px;
}
.flow-block {
  flex: none;
  height: 119px;
  padding: 1.5px 0 0 4px;
  border-bottom: 2px solid #a00000;
  box-sizing: border-box;
}
.flow-row {
  height: 28.5px;
  display: grid;
  grid-template-columns: 138px 50px 79px 62px;
  align-items: center;
}
.flow-bar-cell {
  display: flex;
}
.flow-bar {
  display: block;
  height: 10px;
  background: #00e000;
}
.tick-block {
  flex: 1;
  padding: 1.5px 0 0 4px;
}
.tick-row {
  height: 27.1px;
  display: grid;
  grid-template-columns: 66px 89px 92px 35px 1fr;
  align-items: center;
  padding-right: 5px;
}
.tick-time {
  color: #b4b4b4;
  font-weight: 700;
  letter-spacing: 1px;
}
.side {
  padding-left: 21px;
  text-align: left;
  font-weight: 700;
}
.quote-tabs {
  height: 27px;
  flex: none;
  display: flex;
  font-size: 18px;
  border-top: 1px solid #a00000;
  border-bottom: 2px solid #a00000;
  box-sizing: border-box;
}
.quote-tabs span {
  width: 41.5px;
  display: flex;
  align-items: center;
  justify-content: center;
  border-right: 1px solid #a00000;
  box-sizing: border-box;
}

/* 侧边按钮 */
.rail {
  flex: 1;
  display: flex;
  flex-direction: column;
  align-items: center;
  background: #f0f0f0;
  color: #2040a0;
}
.rail-item {
  width: 100%;
  height: 33.2px;
  flex: none;
  display: flex;
  align-items: center;
  justify-content: center;
}
.rail-item svg {
  width: 26px;
  height: 26px;
}
.rail-item.current {
  background: #fafafa;
  box-shadow: inset 0 0 0 1px #bbb;
}
.period {
  font-size: 15px;
}
.rail-sep {
  width: 30px;
  height: 2px;
  flex: none;
  margin: 4px 0;
  background: #c0c0c0;
}
.ic-arrow {
  fill: #fff;
  stroke: #5a8fe6;
  stroke-width: 1.6;
}
.ic-box {
  fill: #fff;
  stroke: #6a9ae6;
  stroke-width: 1.6;
}
.ic-text {
  fill: #2060c0;
  font-size: 14px;
}
.ic-small {
  font-size: 10px;
}
.ic-zi {
  fill: #f07020;
  font-size: 14px;
  font-family: "Noto Sans CJK SC", sans-serif;
}
.ic-fx {
  fill: #2050b0;
  font-size: 11px;
  font-style: italic;
}
.rsi {
  color: #3a50b8;
  font-size: 15px;
  font-weight: 700;
}
.dollar {
  color: #c83030;
  font-size: 23px;
  font-weight: 700;
}

/* 状态栏 */
.statusbar {
  flex: 1;
  display: flex;
  align-items: center;
  background: #f0f0f0;
  color: #111;
  white-space: nowrap;
}
.index-icon {
  width: 18px;
  height: 24px;
  margin: 0 1px 0 3px;
  flex: none;
  border: 2px solid #e09a20;
  border-radius: 3px;
  box-sizing: border-box;
  background: #f8e080;
  display: flex;
  align-items: center;
}
.index-icon i {
  display: block;
  width: 100%;
  height: 5px;
  background: #e8a830;
}
.index-cell {
  display: flex;
  align-items: center;
}
.idx-name {
  font-size: 25px;
  line-height: 1;
  color: #222;
}
.idx-num {
  color: #ff0000;
  font-size: 21px;
  font-weight: 700;
}
.idx-amount {
  font-size: 21px;
  font-weight: 700;
  line-height: 1;
  color: #111;
}
.idx-amount em {
  font-style: normal;
  font-weight: 400;
  font-size: 25px;
}
.breadth {
  flex: none;
  margin-left: 20px;
  border-left: 2px solid #bbb;
  border-right: 2px solid #bbb;
  padding: 0 6px;
  box-sizing: content-box;
}
.broker {
  margin-left: 6px;
  color: #222;
  font-size: 18px;
}

/* 角标水印 */
.site-badge {
  position: absolute;
  left: 1933px;
  top: 1334px;
  width: 222px;
  height: 56px;
  background: #fff;
  display: flex;
  flex-direction: column;
  align-items: center;
  line-height: 1;
}
.badge-cn {
  height: 30px;
  color: #e81808;
  font-size: 30px;
  line-height: 30px;
  font-weight: 700;
  font-family: "Noto Sans CJK SC", sans-serif;
}
.badge-en {
  color: #f08a10;
  font-size: 24px;
  font-weight: 700;
  margin-top: 2px;
}
</style>
